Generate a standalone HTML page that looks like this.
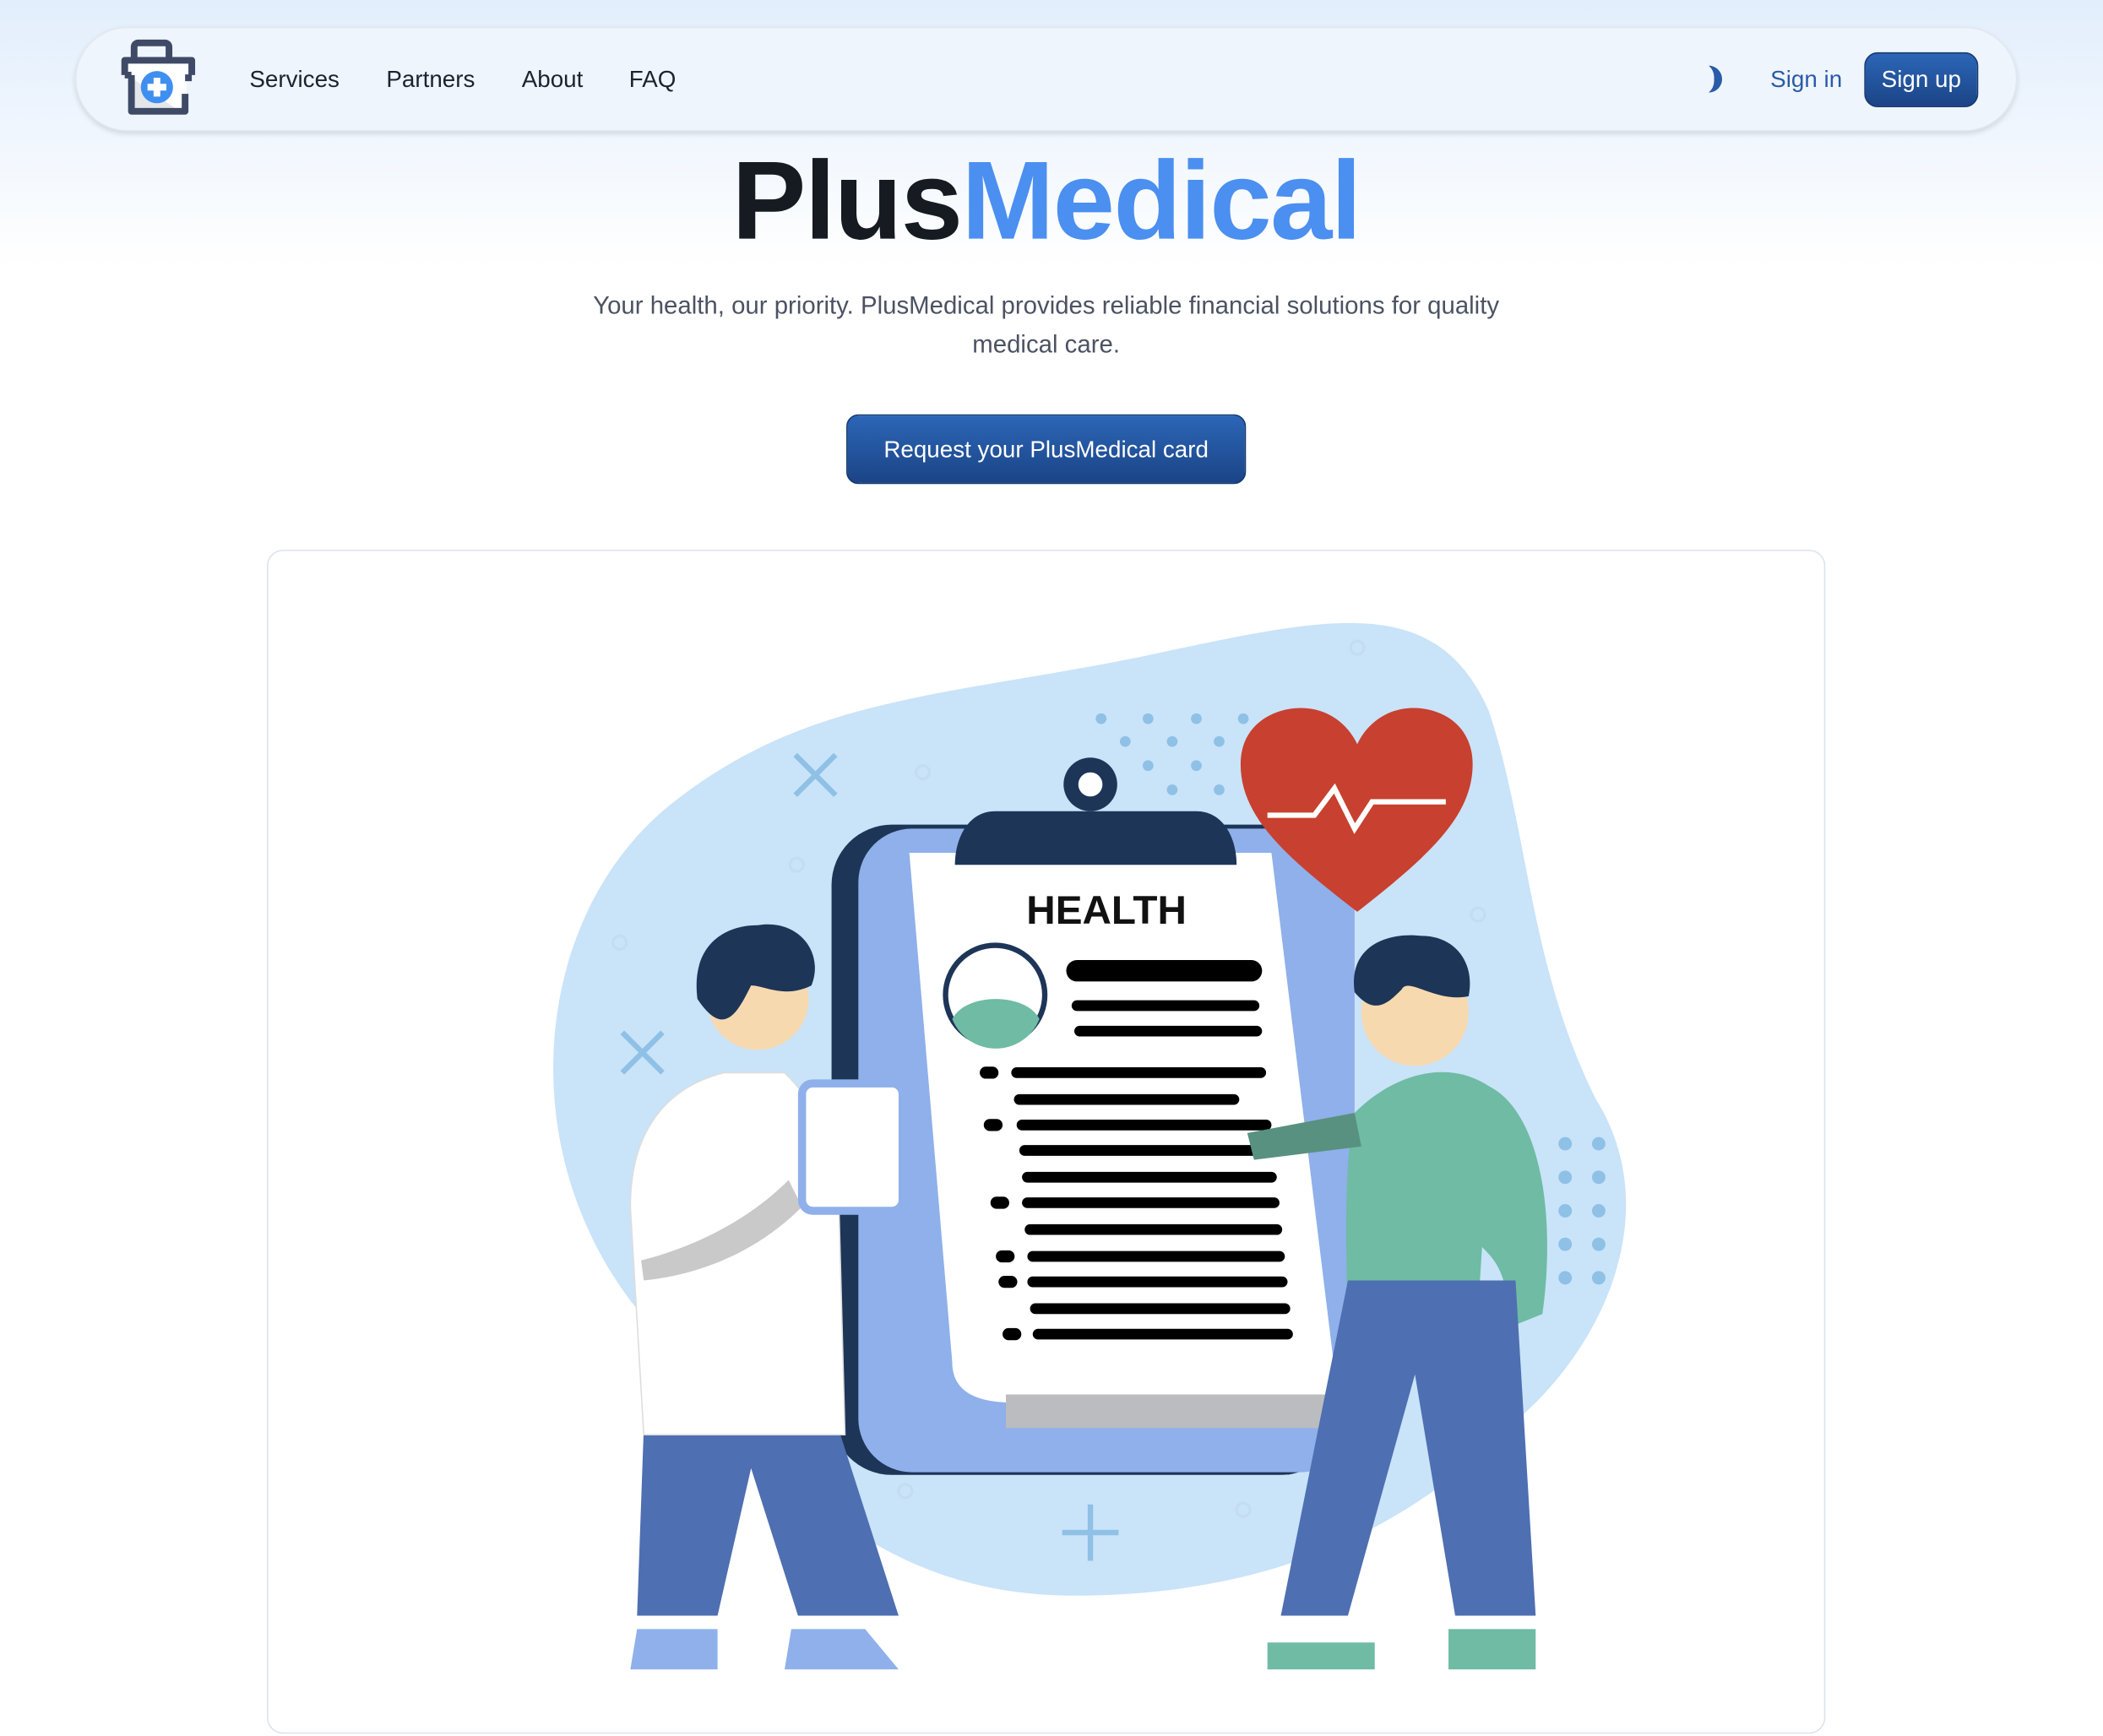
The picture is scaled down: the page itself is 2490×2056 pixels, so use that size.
<!DOCTYPE html>
<html><head><meta charset="utf-8"><style>
html,body{margin:0;padding:0;width:2490px;height:2056px;overflow:hidden;background:#fff;font-family:"Liberation Sans",Arial,sans-serif}
#root{position:absolute;left:0;top:0;width:1568px;height:1295px;transform:scale(1.58801);transform-origin:0 0;background:linear-gradient(#e2eefc 0px,#f3f8fe 120px,#fff 200px,#fff)}
.nav{position:absolute;left:56px;top:20px;width:1448px;height:78px;border-radius:40px;background:#eff5fd;box-shadow:0 2px 4px rgba(0,0,0,.12);border:1px solid #e3e8ef;box-sizing:border-box}
.link{position:absolute;top:49px;font-size:17.5px;color:#1c2230}
.title{position:absolute;left:0;width:1560px;top:102px;text-align:center;font-size:83px;font-weight:bold;color:#161b22;letter-spacing:-1px}
.title span{color:#4b8ff0}
.sub{position:absolute;left:405px;width:750px;top:213px;text-align:center;font-size:18.5px;line-height:29px;color:#4b5262}
.btn{position:absolute;left:631px;top:309px;width:298px;height:52px;border-radius:9px;background:linear-gradient(#2c66b7,#1b4486);border:1px solid #163a70;box-sizing:border-box;color:#fff;font-size:17.5px;text-align:center;line-height:50px}
.card{position:absolute;left:199px;top:410px;width:1162px;height:883px;border:1px solid #dbe3ee;border-radius:12px;background:#fff;box-sizing:border-box}
</style></head><body><div id="root">
<div class="nav"></div>
<svg style="position:absolute;left:86px;top:28px" width="62" height="62" viewBox="0 0 62 62">
<rect x="14" y="4" width="26" height="14" rx="3" fill="none" stroke="#3f4a66" stroke-width="5"/>
<path d="M7 17h50v12h-4v26H12V29H7z" fill="#fff"/>
<path d="M12 30v25h36z" fill="#e4e6ea"/>
<path d="M7 28V17h50v11M7 28h5M12 28v27h40V42M52 30h5" fill="none" stroke="#3f4a66" stroke-width="5" stroke-linejoin="round"/>
<circle cx="31" cy="37" r="12" fill="#3f8ff0"/>
<path d="M31 30v14M24 37h14" stroke="#fff" stroke-width="5"/>
</svg>
<div class="link" style="left:186px">Services</div>
<div class="link" style="left:288px">Partners</div>
<div class="link" style="left:389px">About</div>
<div class="link" style="left:469px">FAQ</div>
<svg style="position:absolute;left:1270px;top:48px" width="22" height="22" viewBox="0 0 22 22"><path d="M4 1a10 10 0 0 1 0 20a12 12 0 0 0 4-10a12 12 0 0 0-4-10z" fill="#2a5ba8"/></svg>
<div class="link" style="left:1320px;color:#2a5ba8">Sign in</div>
<div style="position:absolute;left:1390px;top:39px;width:85px;height:41px;border-radius:10px;background:linear-gradient(#2c66b7,#1b4486);border:1px solid #163a70;box-sizing:border-box;color:#fff;font-size:17.5px;text-align:center;line-height:39px">Sign up</div>
<div class="title">Plus<span>Medical</span></div>
<div class="sub">Your health, our priority. PlusMedical provides reliable financial solutions for quality<br>medical care.</div>
<div class="btn">Request your PlusMedical card</div>
<div class="card"></div>
<svg style="position:absolute;left:0;top:0" width="1568" height="1295" viewBox="0 0 1568 1295">
<path d="M470 970C380 850 400 680 500 600C600 520 700 520 850 490C990 460 1070 440 1110 530C1140 620 1140 720 1190 820C1240 900 1200 1000 1130 1060C1050 1140 950 1190 800 1190C640 1190 560 1080 470 970z" fill="#c9e3f9"/>
<g stroke="#8fc0e6" stroke-width="4" fill="none"><path d="M593 563l30 30M623 563l-30 30M464 770l30 30M494 770l-30 30M813 1122v42M792 1143h42"/></g>
<g fill="#8fc0e6"><circle cx="821" cy="536" r="4"/><circle cx="856" cy="536" r="4"/><circle cx="892" cy="536" r="4"/><circle cx="927" cy="536" r="4"/><circle cx="839" cy="553" r="4"/><circle cx="874" cy="553" r="4"/><circle cx="909" cy="553" r="4"/><circle cx="856" cy="571" r="4"/><circle cx="892" cy="571" r="4"/><circle cx="874" cy="589" r="4"/><circle cx="909" cy="589" r="4"/>
<circle cx="1167" cy="853" r="5"/><circle cx="1192" cy="853" r="5"/><circle cx="1167" cy="878" r="5"/><circle cx="1192" cy="878" r="5"/><circle cx="1167" cy="903" r="5"/><circle cx="1192" cy="903" r="5"/><circle cx="1167" cy="928" r="5"/><circle cx="1192" cy="928" r="5"/><circle cx="1167" cy="953" r="5"/><circle cx="1192" cy="953" r="5"/></g>
<rect x="620" y="615" width="380" height="485" rx="45" fill="#1d3557"/>
<rect x="640" y="618" width="370" height="480" rx="40" fill="#8fb0ea"/>
<path d="M678 636h270l50 410H755c-30 0-45-10-45-30z" fill="#fff"/>
<path d="M750 1040h245v25H750z" fill="#bbbcc0"/>
<circle cx="813" cy="585" r="20" fill="#1d3557"/><circle cx="813" cy="585" r="9" fill="#fff"/>
<path d="M712 645c0-20 10-40 30-40h150c20 0 30 20 30 40z" fill="#1d3557"/>
<text x="825" y="689" text-anchor="middle" font-size="30" font-weight="bold" fill="#111" font-family="Liberation Sans,sans-serif">HEALTH</text>
<circle cx="742" cy="742" r="37" fill="#fff" stroke="#1d3557" stroke-width="4"/>
<path d="M710 760c10-20 55-20 65 0a35 35 0 0 1-65 0z" fill="#6fbba4"/>
<g stroke="#000" stroke-linecap="round"><path d="M803 724h130" stroke-width="16"/><path d="M803 750h132M805 769h132" stroke-width="8"/>
<path d="M758 800h182M760 820h160M762 839h182M764 858h182M766 878h182M766 897h184M768 917h184M770 937h184M770 956h186M772 976h186M774 995h186" stroke-width="8"/>
<path d="M735 800h5M738 839h5M743 897h5M747 937h5M749 956h5M752 995h5" stroke-width="9"/></g>
<path d="M1012 680C960 640 925 610 925 570C925 540 950 528 970 528C990 528 1005 540 1012 555C1019 540 1034 528 1054 528C1074 528 1098 540 1098 570C1098 610 1063 640 1012 680z" fill="#c8402f"/>
<path d="M945 608h35l15-20 15 30 13-20h55" stroke="#fff" stroke-width="4" fill="none"/>
<path d="M480 1065h145l45 140h-75l-35-110-25 110h-60z" fill="#4e6fb1"/>
<path d="M475 1215h60v30h-65zM590 1215h55l25 30h-85z" fill="#8fb0ea"/>
<path d="M470 900c0-60 30-90 70-100h45c20 20 40 50 40 80l5 190H480z" fill="#fff" stroke="#ddd"/>
<path d="M478 940c40-10 80-30 110-60l10 20c-30 30-70 50-118 55z" fill="#c9c9c9"/>
<circle cx="565" cy="745" r="38" fill="#f7d9b0"/>
<path d="M520 745c-5-40 20-55 45-55c30-5 50 20 40 45c-20 10-35 0-45 0c-10 20-20 40-40 10z" fill="#1d3557"/>
<rect x="598" y="808" width="75" height="95" rx="8" fill="#fff" stroke="#8fb0ea" stroke-width="6"/>
<circle cx="1055" cy="755" r="40" fill="#f7d9b0"/>
<path d="M1010 740c-5-35 25-45 50-42c25 0 40 20 35 45c-25 5-45-15-50-5c-10 10-20 20-35 2z" fill="#1d3557"/>
<path d="M1010 830c30-30 70-40 100-20c40 20 50 100 40 170l-25 10c0-40-10-50-20-60l-5 80h-95c0-60-5-130 5-180z" fill="#6fbba4"/>
<path d="M1010 830l-80 15 5 20 80-10z" fill="#58917f"/>
<path d="M1005 955h125l15 250h-60l-30-180-50 180h-50z" fill="#4e6fb1"/>
<path d="M945 1225h80v20h-80zM1080 1215h65v30h-65z" fill="#6fbba4"/>
<g fill="none" stroke="#c4dcf1" stroke-width="2"><circle cx="1012" cy="483" r="5"/><circle cx="688" cy="576" r="5"/><circle cx="594" cy="645" r="5"/><circle cx="462" cy="703" r="5"/><circle cx="1102" cy="682" r="5"/><circle cx="675" cy="1112" r="5"/><circle cx="927" cy="1126" r="5"/></g>
</svg>
</div></body></html>
